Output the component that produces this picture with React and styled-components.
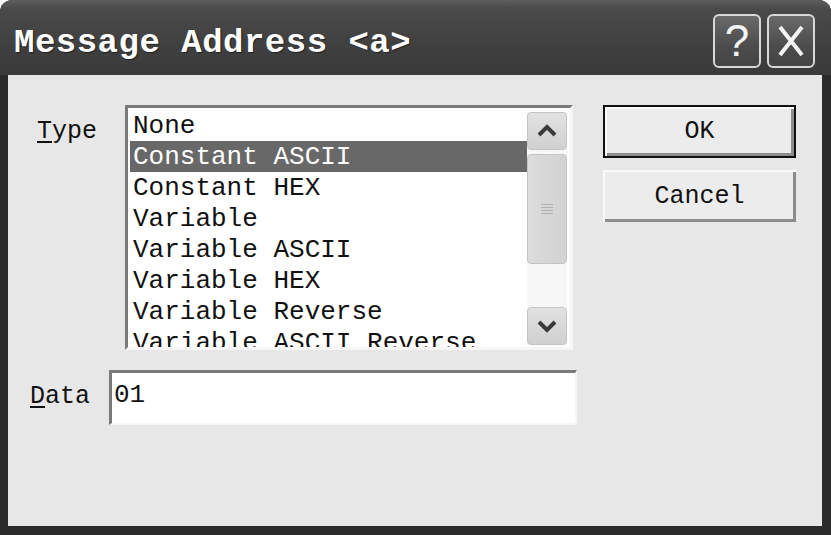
import styled, { createGlobalStyle } from "styled-components";

const Global = createGlobalStyle`
  html, body { margin: 0; padding: 0; background: #ffffff; }
  body { font-family: "Liberation Mono", "DejaVu Sans Mono", monospace; }
`;

const types = [
  "None",
  "Constant ASCII",
  "Constant HEX",
  "Variable",
  "Variable ASCII",
  "Variable HEX",
  "Variable Reverse",
  "Variable ASCII Reverse",
];

const App = () => {
  return (
    <>
      <Global />
      <Window>
        <TitleBar>
          <Title>Message Address &lt;a&gt;</Title>
          <TitleButtons>
            <CapButton>?</CapButton>
            <CapButton>
              <svg width="30" height="34" viewBox="0 0 30 34">
                <path d="M4 3 L26 31 M26 3 L4 31" stroke="#f4f4f4" strokeWidth="4" fill="none" />
              </svg>
            </CapButton>
          </TitleButtons>
        </TitleBar>
        <Body>
          <Fields>
            <TypeRow>
              <Label $w={117} $pl={29} $pt={12}>
                <u>T</u>ype
              </Label>
              <ListBox>
                <Items>
                  {types.map((t, i) => (
                    <Item key={t} $selected={i === 1}>
                      {t}
                    </Item>
                  ))}
                </Items>
                <ScrollBar>
                  <ScrollBtn>
                    <svg width="22" height="14" viewBox="0 0 22 14">
                      <path d="M3 11 L11 3 L19 11" stroke="#3a3a3a" strokeWidth="4" fill="none" />
                    </svg>
                  </ScrollBtn>
                  <Thumb>
                    <Grip />
                  </Thumb>
                  <Track />
                  <ScrollBtn>
                    <svg width="22" height="14" viewBox="0 0 22 14">
                      <path d="M3 3 L11 11 L19 3" stroke="#3a3a3a" strokeWidth="4" fill="none" />
                    </svg>
                  </ScrollBtn>
                </ScrollBar>
              </ListBox>
            </TypeRow>
            <DataRow>
              <Label $w={101} $pl={22} $pt={12}>
                <u>D</u>ata
              </Label>
              <DataInput>01</DataInput>
            </DataRow>
          </Fields>
          <Buttons>
            <Button $default>OK</Button>
            <Button>Cancel</Button>
          </Buttons>
        </Body>
      </Window>
    </>
  );
};
export default App;

const Window = styled.div`
  width: 831px;
  height: 535px;
  display: flex;
  flex-direction: column;
  background: #2b2b2b;
  border-radius: 12px 12px 0 0;
  overflow: hidden;
`;

const TitleBar = styled.div`
  height: 75px;
  flex: none;
  display: flex;
  align-items: center;
  justify-content: space-between;
  padding: 0 14px 0 14px;
  box-sizing: border-box;
  background: linear-gradient(#5e5e5e 0%, #4a4a4a 12%, #404040 60%, #3a3a3a 100%);
`;

const Title = styled.div`
  color: #ffffff;
  font-family: "Liberation Mono", monospace;
  font-weight: bold;
  font-size: 34px;
  letter-spacing: 0.5px;
  text-shadow: 1px 1px 1px #202020;
  margin-top: 10px;
`;

const TitleButtons = styled.div`
  display: flex;
  gap: 6px;
  margin-top: 6px;
  margin-right: 2px;
`;

const CapButton = styled.div`
  width: 48px;
  height: 54px;
  box-sizing: border-box;
  border: 2px solid #d8d8d8;
  border-radius: 6px;
  background: linear-gradient(#6a6a6a, #4c4c4c 60%, #444444);
  color: #f4f4f4;
  font-family: "Liberation Sans", Arial, sans-serif;
  font-size: 44px;
  line-height: 50px;
  text-align: center;
  display: flex;
  align-items: center;
  justify-content: center;
`;

const Body = styled.div`
  flex: 1;
  margin: 0 9px 9px 8px;
  background: #e7e7e7;
  display: flex;
  align-items: flex-start;
  padding-top: 30px;
  box-sizing: border-box;
`;

const Fields = styled.div`
  width: 569px;
  display: flex;
  flex-direction: column;
  gap: 20px;
`;

const TypeRow = styled.div`
  display: flex;
  align-items: flex-start;
`;

const DataRow = styled.div`
  display: flex;
  align-items: flex-start;
`;

const Label = styled.div`
  width: ${(p) => p.$w}px;
  padding-left: ${(p) => p.$pl}px;
  padding-top: ${(p) => p.$pt}px;
  box-sizing: border-box;
  font-size: 25px;
  color: #111;
  u { text-decoration-thickness: 2px; text-underline-offset: 3px; }
`;

const ListBox = styled.div`
  width: 448px;
  height: 245px;
  box-sizing: border-box;
  border-top: 3px solid #7a7a7a;
  border-left: 3px solid #7a7a7a;
  border-right: 3px solid #f6f6f6;
  border-bottom: 3px solid #f6f6f6;
  background: #ffffff;
  display: flex;
  overflow: hidden;
`;

const Items = styled.div`
  flex: 1;
  padding: 2px 0 0 2px;
  overflow: hidden;
`;

const Item = styled.div`
  height: 31px;
  line-height: 32px;
  padding-left: 3px;
  font-size: 26px;
  white-space: nowrap;
  color: ${(p) => (p.$selected ? "#ffffff" : "#111111")};
  background: ${(p) => (p.$selected ? "#686868" : "transparent")};
`;

const ScrollBar = styled.div`
  width: 40px;
  margin: 4px 3px 2px 0;
  display: flex;
  flex-direction: column;
  gap: 4px;
  background: #f7f7f7;
`;

const ScrollBtn = styled.div`
  height: 38px;
  box-sizing: border-box;
  border: 1px solid #c4c4c4;
  border-radius: 4px;
  background: linear-gradient(#e2e2e2, #d0d0d0);
  display: flex;
  align-items: center;
  justify-content: center;
`;

const Thumb = styled.div`
  height: 110px;
  box-sizing: border-box;
  border: 1px solid #c4c4c4;
  border-radius: 4px;
  background: linear-gradient(90deg, #dcdcdc, #d2d2d2);
  display: flex;
  align-items: center;
  justify-content: center;
`;

const Grip = styled.div`
  width: 12px;
  height: 11px;
  background: repeating-linear-gradient(#b0b0b0 0 1px, transparent 1px 3px);
`;

const Track = styled.div`
  flex: 1;
`;

const DataInput = styled.div`
  width: 468px;
  height: 55px;
  box-sizing: border-box;
  border-top: 3px solid #7a7a7a;
  border-left: 3px solid #7a7a7a;
  border-right: 2px solid #f6f6f6;
  border-bottom: 2px solid #f6f6f6;
  background: #ffffff;
  padding: 7px 0 0 2px;
  font-size: 26px;
  color: #111;
`;

const Buttons = styled.div`
  margin-left: 26px;
  display: flex;
  flex-direction: column;
  gap: 12px;
`;

const Button = styled.div`
  width: 193px;
  height: ${(p) => (p.$default ? 53 : 52)}px;
  box-sizing: border-box;
  display: flex;
  align-items: center;
  justify-content: center;
  font-size: 25px;
  color: #111;
  background: #ececec;
  border: ${(p) => (p.$default ? "2px solid #111" : "none")};
  box-shadow: inset 2px 2px 0 #fafafa, inset -3px -3px 0 #8c8c8c;
`;
